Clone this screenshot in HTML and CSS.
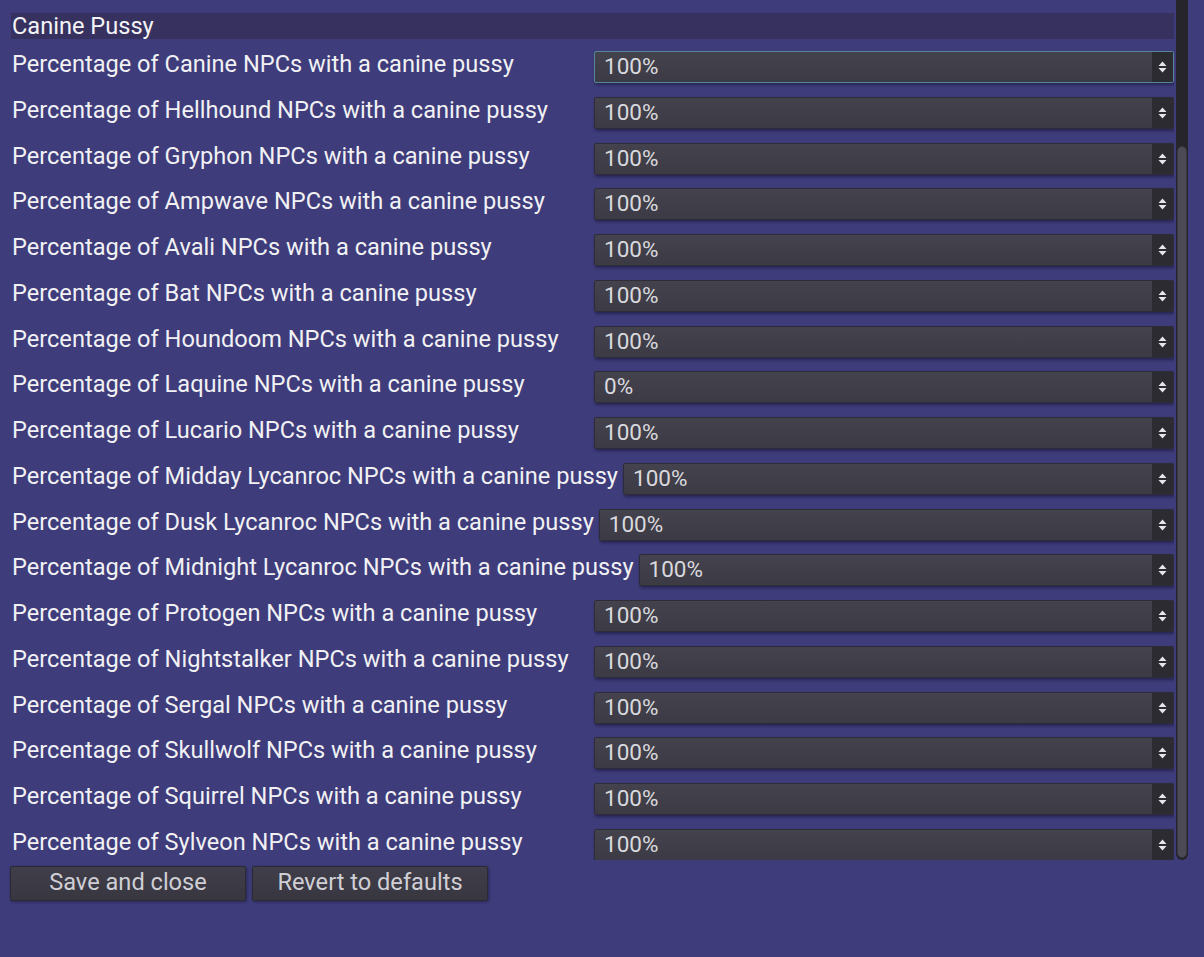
FILE: index.html
```html
<!DOCTYPE html>
<html>
<head>
<meta charset="utf-8">
<link rel="stylesheet" href="styles.css">
</head>
<body>
<div class="window">
  <div class="scroll">
    <div class="content">
      <div class="section-title">Canine Pussy</div>
      <div class="rows">
        <div class="row"><span class="label">Percentage of Canine NPCs with a canine pussy</span><div class="spin focused"><span class="value">100%</span><span class="arrows"><svg width="9" height="12" viewBox="0 0 9 12"><path d="M4.5 0.5 L8.5 5 H0.5 Z M0.5 7 H8.5 L4.5 11.5 Z" fill="#e6e6ea"/></svg></span></div></div>
        <div class="row"><span class="label">Percentage of Hellhound NPCs with a canine pussy</span><div class="spin"><span class="value">100%</span><span class="arrows"><svg width="9" height="12" viewBox="0 0 9 12"><path d="M4.5 0.5 L8.5 5 H0.5 Z M0.5 7 H8.5 L4.5 11.5 Z" fill="#e6e6ea"/></svg></span></div></div>
        <div class="row"><span class="label">Percentage of Gryphon NPCs with a canine pussy</span><div class="spin"><span class="value">100%</span><span class="arrows"><svg width="9" height="12" viewBox="0 0 9 12"><path d="M4.5 0.5 L8.5 5 H0.5 Z M0.5 7 H8.5 L4.5 11.5 Z" fill="#e6e6ea"/></svg></span></div></div>
        <div class="row"><span class="label">Percentage of Ampwave NPCs with a canine pussy</span><div class="spin"><span class="value">100%</span><span class="arrows"><svg width="9" height="12" viewBox="0 0 9 12"><path d="M4.5 0.5 L8.5 5 H0.5 Z M0.5 7 H8.5 L4.5 11.5 Z" fill="#e6e6ea"/></svg></span></div></div>
        <div class="row"><span class="label">Percentage of Avali NPCs with a canine pussy</span><div class="spin"><span class="value">100%</span><span class="arrows"><svg width="9" height="12" viewBox="0 0 9 12"><path d="M4.5 0.5 L8.5 5 H0.5 Z M0.5 7 H8.5 L4.5 11.5 Z" fill="#e6e6ea"/></svg></span></div></div>
        <div class="row"><span class="label">Percentage of Bat NPCs with a canine pussy</span><div class="spin"><span class="value">100%</span><span class="arrows"><svg width="9" height="12" viewBox="0 0 9 12"><path d="M4.5 0.5 L8.5 5 H0.5 Z M0.5 7 H8.5 L4.5 11.5 Z" fill="#e6e6ea"/></svg></span></div></div>
        <div class="row"><span class="label">Percentage of Houndoom NPCs with a canine pussy</span><div class="spin"><span class="value">100%</span><span class="arrows"><svg width="9" height="12" viewBox="0 0 9 12"><path d="M4.5 0.5 L8.5 5 H0.5 Z M0.5 7 H8.5 L4.5 11.5 Z" fill="#e6e6ea"/></svg></span></div></div>
        <div class="row"><span class="label">Percentage of Laquine NPCs with a canine pussy</span><div class="spin"><span class="value">0%</span><span class="arrows"><svg width="9" height="12" viewBox="0 0 9 12"><path d="M4.5 0.5 L8.5 5 H0.5 Z M0.5 7 H8.5 L4.5 11.5 Z" fill="#e6e6ea"/></svg></span></div></div>
        <div class="row"><span class="label">Percentage of Lucario NPCs with a canine pussy</span><div class="spin"><span class="value">100%</span><span class="arrows"><svg width="9" height="12" viewBox="0 0 9 12"><path d="M4.5 0.5 L8.5 5 H0.5 Z M0.5 7 H8.5 L4.5 11.5 Z" fill="#e6e6ea"/></svg></span></div></div>
        <div class="row"><span class="label">Percentage of Midday Lycanroc NPCs with a canine pussy</span><div class="spin"><span class="value">100%</span><span class="arrows"><svg width="9" height="12" viewBox="0 0 9 12"><path d="M4.5 0.5 L8.5 5 H0.5 Z M0.5 7 H8.5 L4.5 11.5 Z" fill="#e6e6ea"/></svg></span></div></div>
        <div class="row"><span class="label">Percentage of Dusk Lycanroc NPCs with a canine pussy</span><div class="spin"><span class="value">100%</span><span class="arrows"><svg width="9" height="12" viewBox="0 0 9 12"><path d="M4.5 0.5 L8.5 5 H0.5 Z M0.5 7 H8.5 L4.5 11.5 Z" fill="#e6e6ea"/></svg></span></div></div>
        <div class="row"><span class="label">Percentage of Midnight Lycanroc NPCs with a canine pussy</span><div class="spin"><span class="value">100%</span><span class="arrows"><svg width="9" height="12" viewBox="0 0 9 12"><path d="M4.5 0.5 L8.5 5 H0.5 Z M0.5 7 H8.5 L4.5 11.5 Z" fill="#e6e6ea"/></svg></span></div></div>
        <div class="row"><span class="label">Percentage of Protogen NPCs with a canine pussy</span><div class="spin"><span class="value">100%</span><span class="arrows"><svg width="9" height="12" viewBox="0 0 9 12"><path d="M4.5 0.5 L8.5 5 H0.5 Z M0.5 7 H8.5 L4.5 11.5 Z" fill="#e6e6ea"/></svg></span></div></div>
        <div class="row"><span class="label">Percentage of Nightstalker NPCs with a canine pussy</span><div class="spin"><span class="value">100%</span><span class="arrows"><svg width="9" height="12" viewBox="0 0 9 12"><path d="M4.5 0.5 L8.5 5 H0.5 Z M0.5 7 H8.5 L4.5 11.5 Z" fill="#e6e6ea"/></svg></span></div></div>
        <div class="row"><span class="label">Percentage of Sergal NPCs with a canine pussy</span><div class="spin"><span class="value">100%</span><span class="arrows"><svg width="9" height="12" viewBox="0 0 9 12"><path d="M4.5 0.5 L8.5 5 H0.5 Z M0.5 7 H8.5 L4.5 11.5 Z" fill="#e6e6ea"/></svg></span></div></div>
        <div class="row"><span class="label">Percentage of Skullwolf NPCs with a canine pussy</span><div class="spin"><span class="value">100%</span><span class="arrows"><svg width="9" height="12" viewBox="0 0 9 12"><path d="M4.5 0.5 L8.5 5 H0.5 Z M0.5 7 H8.5 L4.5 11.5 Z" fill="#e6e6ea"/></svg></span></div></div>
        <div class="row"><span class="label">Percentage of Squirrel NPCs with a canine pussy</span><div class="spin"><span class="value">100%</span><span class="arrows"><svg width="9" height="12" viewBox="0 0 9 12"><path d="M4.5 0.5 L8.5 5 H0.5 Z M0.5 7 H8.5 L4.5 11.5 Z" fill="#e6e6ea"/></svg></span></div></div>
        <div class="row"><span class="label">Percentage of Sylveon NPCs with a canine pussy</span><div class="spin"><span class="value">100%</span><span class="arrows"><svg width="9" height="12" viewBox="0 0 9 12"><path d="M4.5 0.5 L8.5 5 H0.5 Z M0.5 7 H8.5 L4.5 11.5 Z" fill="#e6e6ea"/></svg></span></div></div>
      </div>
    </div>
    <div class="scrollbar"><div class="thumb"></div></div>
  </div>
  <div class="buttons">
    <button class="btn">Save and close</button>
    <button class="btn">Revert to defaults</button>
  </div>
</div>
</body>
</html>
```

FILE: styles.css
```css
html, body {
  margin: 0;
  padding: 0;
  background: #3e3c7a;
  width: 1204px;
  height: 957px;
  overflow: hidden;
}

.window {
  display: flex;
  flex-direction: column;
  font-family: "Roboto", "Noto Sans", sans-serif;
  font-size: 23.6px;
  color: #f1f1f4;
}

.scroll {
  display: flex;
  height: 860px;
  padding-left: 11px;
}

.content {
  width: 1163px;
  overflow: hidden;
  padding-top: 13px;
  box-sizing: border-box;
}

.section-title {
  height: 26px;
  line-height: 26px;
  background: #37315f;
  padding-left: 1px;
  color: #f4f4f6;
}

.rows {
  display: flex;
  flex-direction: column;
  gap: 13.76px;
  margin-top: 12px;
}

.row {
  display: flex;
  align-items: center;
  height: 32px;
  gap: 5px;
}

.label {
  flex: 0 0 auto;
  min-width: 577px;
  padding-left: 1px;
  white-space: nowrap;
  position: relative;
  top: -3px;
}

.spin {
  flex: 1;
  display: flex;
  height: 32px;
  box-sizing: border-box;
  border: 1px solid #2e2d37;
  border-radius: 2px;
  background: linear-gradient(#44424c, #3c3a44);
  box-shadow: 1px 2px 3px rgba(20, 18, 50, 0.55);
}

.spin.focused {
  border-color: #55869a;
}

.value {
  flex: 1;
  padding-left: 9px;
  line-height: 28px;
  color: #d9d9de;
  font-size: 22.5px;
}

.arrows {
  width: 21px;
  display: flex;
  align-items: center;
  justify-content: center;
  background: #2c2b31;
}

.scrollbar {
  width: 12px;
  margin-left: 2px;
  background: #26252b;
  border-radius: 0 0 6px 6px;
  display: flex;
  flex-direction: column;
  padding: 146px 1px 2px 1px;
  box-sizing: border-box;
}

.thumb {
  flex: 1;
  background: #4c4a54;
  border-radius: 5px;
  border: 1px solid #38363f;
}

.buttons {
  display: flex;
  gap: 6px;
  padding-left: 10px;
  margin-top: 6px;
}

.btn {
  width: 236px;
  height: 35px;
  font-family: "Roboto", "Noto Sans", sans-serif;
  font-size: 23.6px;
  color: #cfcfd5;
  background: linear-gradient(#403e4a, #38363f);
  border: 1px solid #2b2a33;
  border-radius: 2px;
  box-shadow: 1px 1px 3px rgba(20, 18, 50, 0.5);
  padding: 0 0 4px 0;
  line-height: 28px;
}
```
